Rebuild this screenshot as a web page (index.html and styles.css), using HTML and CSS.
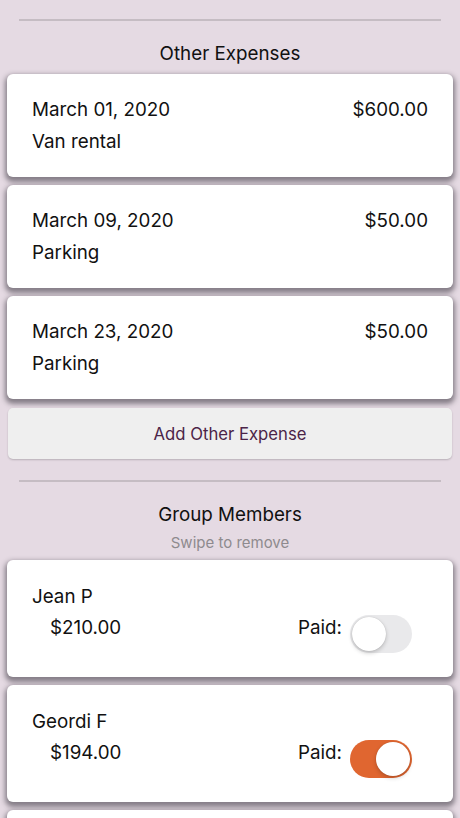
FILE: index.html
```html
<!DOCTYPE html>
<html>
<head>
<meta charset="utf-8">
<link rel="stylesheet" href="styles.css">
</head>
<body>
<div class="page">
  <div class="divider first"></div>
  <div class="section-title">Other Expenses</div>
  <div class="list">
    <div class="card expense">
      <div class="row"><span>March 01, 2020</span><span>$600.00</span></div>
      <div class="row"><span>Van rental</span></div>
    </div>
    <div class="card expense">
      <div class="row"><span>March 09, 2020</span><span>$50.00</span></div>
      <div class="row"><span>Parking</span></div>
    </div>
    <div class="card expense">
      <div class="row"><span>March 23, 2020</span><span>$50.00</span></div>
      <div class="row"><span>Parking</span></div>
    </div>
    <div class="add-btn">Add Other Expense</div>
  </div>
  <div class="divider second"></div>
  <div class="section-title members">Group Members</div>
  <div class="subtitle">Swipe to remove</div>
  <div class="list members-list">
    <div class="card member">
      <div class="name">Jean P</div>
      <div class="member-row">
        <span class="amount">$210.00</span>
        <span class="paid">Paid:<span class="toggle"><span class="knob"></span></span></span>
      </div>
    </div>
    <div class="card member">
      <div class="name">Geordi F</div>
      <div class="member-row">
        <span class="amount">$194.00</span>
        <span class="paid">Paid:<span class="toggle on"><span class="knob"></span></span></span>
      </div>
    </div>
    <div class="card member">
      <div class="name">&nbsp;</div>
    </div>
  </div>
</div>
</body>
</html>
```
FILE: styles.css
```css
html, body {
  margin: 0;
  padding: 0;
  background: #e5dae3;
}
body {
  font-family: Inter, "Noto Sans", sans-serif;
  color: #111;
  overflow: hidden;
  height: 818px;
}
.page {
  padding-top: 19px;
}
.divider {
  height: 2px;
  background: #c5bcc3;
  margin: 0 19px;
}
.section-title {
  text-align: center;
  font-size: 18.8px;
  line-height: 24px;
  margin-top: 21px;
  margin-bottom: 8px;
}
.list {
  display: flex;
  flex-direction: column;
  gap: 8px;
  padding: 0 7px;
}
.card {
  background: #fff;
  border-radius: 6px;
  box-shadow: 0 3px 5px 2px rgba(40, 35, 45, 0.5);
}
.expense {
  height: 103px;
  box-sizing: border-box;
  padding: 24px 25px 0 25px;
  display: flex;
  flex-direction: column;
  gap: 8px;
}
.row {
  display: flex;
  justify-content: space-between;
  font-size: 18.8px;
  line-height: 24px;
}
.add-btn {
  margin: 1px 1px 0 1px;
  height: 51px;
  background: #efefef;
  border-radius: 5px;
  box-shadow: 0 1px 2px rgba(0, 0, 0, 0.2);
  display: flex;
  align-items: center;
  justify-content: center;
  font-size: 16.7px;
  color: #4b2448;
}
.divider.second {
  margin-top: 21px;
}
.section-title.members {
  margin-top: 21px;
  margin-bottom: 0;
}
.subtitle {
  text-align: center;
  font-size: 15px;
  line-height: 20px;
  color: #8e8a8e;
  margin-top: 6px;
  margin-bottom: 7px;
}
.member {
  height: 117px;
  box-sizing: border-box;
  padding: 25px 41px 0 25px;
}
.name {
  font-size: 18.8px;
  line-height: 24px;
}
.member-row {
  display: flex;
  justify-content: space-between;
  align-items: flex-start;
  margin-top: 7px;
  padding-left: 18px;
}
.amount {
  font-size: 18.8px;
  line-height: 24px;
}
.paid {
  display: flex;
  align-items: flex-start;
  gap: 8px;
  font-size: 18.8px;
  line-height: 24px;
}
.toggle {
  width: 62px;
  height: 38px;
  margin-top: -1px;
  border-radius: 19px;
  background: #e9e9eb;
  box-sizing: border-box;
  padding: 2px;
  display: flex;
}
.toggle .knob {
  width: 34px;
  height: 34px;
  border-radius: 50%;
  background: #fff;
  box-shadow: 0 2px 4px rgba(0, 0, 0, 0.2), 0 0 1px rgba(0, 0, 0, 0.2);
}
.toggle.on {
  background: #e06630;
  justify-content: flex-end;
}
```
